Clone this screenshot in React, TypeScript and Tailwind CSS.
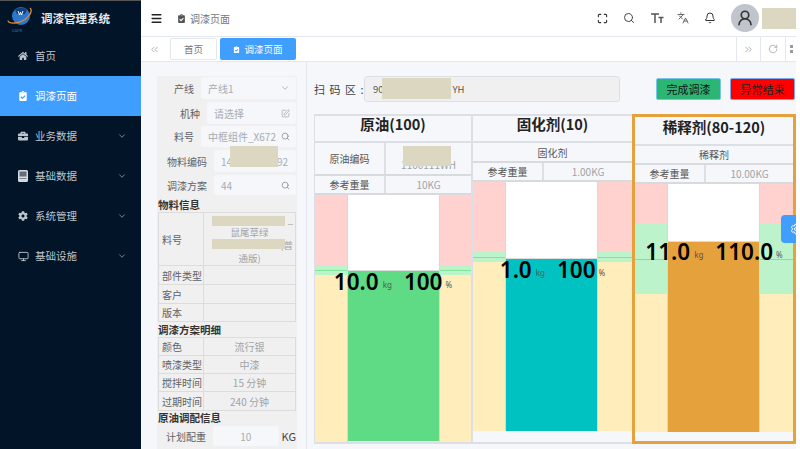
import React from "react";
import { ChevronDown, ChevronsLeft, ChevronsRight, RotateCw, Search, SquarePen, Menu, Maximize, Languages, Bell, UserRound, Monitor, Settings } from "lucide-react";
import { FaHome, FaClipboardCheck, FaBriefcase, FaCog } from "react-icons/fa";

const font = "font-['Noto_Sans_CJK_SC','Noto_Sans',sans-serif]";

function Mask({ className }: { className: string }) {
  return <div className={"absolute bg-[#dcd7c0] " + className} />;
}

function BookIcon() {
  return (
    <svg viewBox="0 0 10 12" className="w-[10px] h-[12px]" fill="#d5dae0">
      <path d="M1.5 0h7A1.5 1.5 0 0 1 10 1.500v9A1.500 1.500 0 0 1 8.500 12h-7A1.500 1.500 0 0 1 0 10.500v-9A1.500 1.500 0 0 1 1.500 0z" />
      <path d="M1.500 1.500h7v5h-7zM1.500 8h7v.8h-7z" fill="#011428" opacity=".55" />
    </svg>
  );
}

function FontSizeIcon() {
  return (
    <svg viewBox="0 0 14 12" className="ml-[15px] w-[14px] h-[12px]" fill="none" stroke="#555" strokeWidth="1.500">
      <path d="M1 2h8M5 2v9M8.500 5.500h5M11 5.500V11" />
    </svg>
  );
}

function NavItem({ icon, label, active, arrow }: { icon: React.ReactNode; label: string; active?: boolean; arrow?: boolean }) {
  return (
    <div className={"h-10 flex items-center pl-[18px] pr-[14px] text-[10.5px] " + (active ? "bg-[#409eff] text-white" : "text-[#bfc5cc]")}>
      <span className="w-[17px] flex items-center">{icon}</span>
      <span className="flex-1">{label}</span>
      {arrow && <ChevronDown size={10} className="text-[#8f99a5]" />}
    </div>
  );
}

function Sidebar() {
  return (
    <aside className="w-[141px] shrink-0 h-full bg-[#011428] border-t border-[#555]">
      <div className="h-[35px] flex items-center pl-[7px]">
        <div className="relative w-[27px] h-[28px]">
          <svg viewBox="0 0 27 28" className="w-[27px] h-[28px]">
            <circle cx="14" cy="11" r="9" fill="#2d78c8" />
            <path d="M8 5c3-3 9-3 12 0l-2 4H10z" fill="#123f7d" />
            <path d="M11 6l1.500 4 1-3 1 3 1.500-4" stroke="#fff" strokeWidth=".9" fill="none" />
            <path d="M23 3c4 4-4 14-15 15-4 .4-7-.5-7-2.500" stroke="#e08a2c" strokeWidth="1.300" fill="none" />
          </svg>
          <span className="absolute left-[5px] top-[23px] text-[4px] leading-[5px] text-[#3f7fc8]">CGFR</span>
        </div>
        <span className="ml-[7px] text-[11.5px] font-bold text-[#e6e8ea]">调漆管理系统</span>
      </div>
      <NavItem icon={<FaHome size={10} />} label="首页" />
      <NavItem active icon={<FaClipboardCheck size={10} />} label="调漆页面" />
      <NavItem arrow icon={<FaBriefcase size={10} />} label="业务数据" />
      <NavItem arrow icon={<BookIcon />} label="基础数据" />
      <NavItem arrow icon={<FaCog size={10} />} label="系统管理" />
      <NavItem arrow icon={<Monitor size={11} />} label="基础设施" />
    </aside>
  );
}

function Header() {
  return (
    <header className="h-[37px] bg-white border-b border-[#e4e7ed] flex items-center pl-[9px] text-[#5a5e66]">
      <Menu size={13} strokeWidth={2.6} className="text-[#222]" />
      <FaClipboardCheck size={9} className="ml-[14px] text-[#555]" />
      <span className="ml-[4px] text-[10px] text-[#777]">调漆页面</span>
      <div className="ml-auto flex items-center">
        <Maximize size={11} strokeWidth={2.4} className="text-[#333]" />
        <Search size={12} className="ml-[15px] text-[#444]" />
        <FontSizeIcon />
        <Languages size={12} className="ml-[13px] text-[#666]" />
        <Bell size={12} className="ml-[15px] text-[#333]" />
        <div className="ml-[15px] w-[28px] h-[28px] rounded-full bg-[#c0c4cc] flex items-center justify-center">
          <UserRound size={18} strokeWidth={2.2} className="text-[#333]" />
        </div>
        <div className="ml-[3px] w-[34px] h-[21px] bg-[#dcd7c0]" />
      </div>
    </header>
  );
}

function TabBar() {
  return (
    <div className="h-[25px] bg-white border-b border-[#e4e7ed] flex items-center text-[9.5px]">
      <div className="w-[26px] flex justify-center"><ChevronsLeft size={11} className="text-[#aaa]" /></div>
      <div className="ml-[3px] w-[47px] h-[22px] bg-white border border-[#e4e7ed] rounded-[2px] flex items-center justify-center text-[#777]">首页</div>
      <div className="ml-[3px] w-[76px] h-[22px] bg-[#409eff] rounded-[2px] flex items-center justify-center gap-[4px] text-white">
        <FaClipboardCheck size={7} />调漆页面
      </div>
      <div className="ml-auto flex h-full">
        <div className="w-[24px] border-l border-[#e4e7ed] flex items-center justify-center"><ChevronsRight size={11} className="text-[#aaa]" /></div>
        <div className="w-[25px] border-l border-[#e4e7ed] flex items-center justify-center"><RotateCw size={10} className="text-[#aaa]" /></div>
        <div className="w-[11px] border-l border-[#e4e7ed] flex flex-col items-center justify-center gap-[2px]">
          <i className="w-[3px] h-[3px] bg-[#999]" /><i className="w-[3px] h-[3px] bg-[#999]" />
        </div>
      </div>
    </div>
  );
}

function Field({ label, value, icon, mlClass, className, children }: { label: string; value: string; icon?: React.ReactNode; mlClass: string; className: string; children?: React.ReactNode }) {
  return (
    <div className={"relative flex items-center " + className}>
      <div className={"text-right text-[#606266] text-[10px] pr-[7px] shrink-0 " + mlClass}>{label}</div>
      <div className="flex-1 min-w-0 h-full bg-[#f5f7fa] rounded-[3px] flex items-center pl-[7px] pr-[6px] text-[#a8abb2] text-[10px]">
        <span className="flex-1 whitespace-pre overflow-hidden">{value}</span>
        {icon}
      </div>
      {children}
    </div>
  );
}

function Row({ label, value, className }: { label: string; value?: React.ReactNode; className: string }) {
  return (
    <div className={"flex border-b border-[#dcdcdc] text-[10px] " + className}>
      <div className="w-[45px] shrink-0 flex items-center pl-[3px] text-[#606266] border-r border-[#dcdcdc] whitespace-nowrap">{label}</div>
      <div className="flex-1 flex items-center justify-center text-[#a0a3a8]">{value}</div>
    </div>
  );
}

function SectionTitle({ children, className }: { children: React.ReactNode; className: string }) {
  return <div className={"text-[10.5px] font-bold text-[#333] leading-[13px] " + className}>{children}</div>;
}

function LeftPanel() {
  return (
    <div className="w-[140px] h-full mt-[14px] bg-[#f0f0f0] shrink-0 pr-[1px]">
      <Field className="h-[22px] mt-[1px]" mlClass="w-[44px]" label="产线" value="产线1" icon={<ChevronDown size={10} className="text-[#aaa]" />} />
      <Field className="h-[22px] mt-[3px]" mlClass="w-[50px]" label="机种" value="请选择" icon={<SquarePen size={9} className="text-[#aaa]" />} />
      <Field className="h-[21px] mt-[2px]" mlClass="w-[44px]" label="料号" value="中框组件_X672" icon={<Search size={9} className="ml-[2px] text-[#888]" />} />
      <Field className="h-[22px] mt-[3px]" mlClass="w-[57px]" label="物料编码" value="14                    92">
        <Mask className="left-[73px] top-[-4px] w-[48px] h-[21px]" />
      </Field>
      <Field className="h-[20px] mt-[3px]" mlClass="w-[57px]" label="调漆方案" value="44" icon={<Search size={9} className="text-[#888]" />} />
      <SectionTitle className="mt-[3px] h-[14px] pl-[1px]">物料信息</SectionTitle>
      <div className="ml-[1px] border border-b-0 border-[#dcdcdc]">
        <Row className="h-[53px]" label="料号" value={
          <div className="relative w-full text-center leading-[13px] text-[9.5px]">
            <div className="text-right pr-[2px]">_</div><div>鼠尾草绿</div><div className="text-right pr-[2px]">(普</div><div>通版)</div>
            <Mask className="left-[8px] top-[3px] w-[73px] h-[10px]" />
            <Mask className="left-[8px] top-[26px] w-[73px] h-[10px]" />
          </div>
        } />
        <Row className="h-[19px]" label="部件类型" />
        <Row className="h-[19px]" label="客户" />
        <Row className="h-[18px]" label="版本" />
      </div>
      <SectionTitle className="mt-[1px] h-[14px] pl-[1px]">调漆方案明细</SectionTitle>
      <div className="ml-[1px] border border-b-0 border-[#dcdcdc]">
        <Row className="h-[18px]" label="颜色" value="流行银" />
        <Row className="h-[18px]" label="喷漆类型" value="中漆" />
        <Row className="h-[18px]" label="搅拌时间" value="15 分钟" />
        <Row className="h-[19px]" label="过期时间" value="240 分钟" />
      </div>
      <SectionTitle className="h-[15px] pl-[1px]">原油调配信息</SectionTitle>
      <div className="flex items-center h-[20px]">
        <div className="w-[57px] pr-[7px] text-right text-[10px] text-[#606266]">计划配重</div>
        <div className="w-[67px] h-full bg-[#f5f7fa] rounded-[3px] flex items-center justify-center text-[10px] text-[#a8abb2]">10</div>
        <div className="ml-[3px] text-[11px] text-[#444]">KG</div>
      </div>
    </div>
  );
}

type ColProps = {
  title: string;
  titleShift: string;
  wrap: string;
  head: string;
  topRow: React.ReactNode;
  weight: string;
  red: string;
  green: string;
  yellow: string;
  line: string;
  white: string;
  fill: string;
  valueTop: string;
  value: string;
  pct: string;
  tank: string;
};

function Column(p: ColProps) {
  return (
    <div className={"flex flex-col shrink-0 h-[330px] " + p.wrap}>
      <div className={"flex items-center justify-center text-[14.5px] font-bold text-[#222] border-b-2 border-[#dcdfe6] " + p.head}>
        <span className={"relative " + p.titleShift}>{p.title}</span>
      </div>
      {p.topRow}
      <div className="flex h-[19px] shrink-0 border-b-2 border-[#d8dade] text-[10px]">
        <div className="w-[71px] flex items-center justify-center text-[#555] border-r-2 border-[#dcdfe6]">参考重量</div>
        <div className="flex-1 flex items-center justify-center text-[#a0a3a8]">{p.weight}</div>
      </div>
      <div className={"relative shrink-0 " + p.tank}>
        <div className={"bg-[#ffd2d0] " + p.red} />
        <div className={"relative bg-[#bdf3cb] " + p.green}>
          <div className={"absolute inset-x-0 h-[1px] bg-[#7fe39a] " + p.line} />
        </div>
        <div className={"bg-[#ffedbb] " + p.yellow} />
        <div className="absolute inset-y-0 left-[32px] w-[93px] flex flex-col border-x border-[#d8d8d8]">
          <div className={"bg-white shrink-0 " + p.white} />
          <div className={"flex-1 border-t border-[#ddd] " + p.fill} />
        </div>
        <div className={"absolute inset-x-0 flex items-end justify-center text-black font-['Noto_Sans',sans-serif] " + p.valueTop}>
          <span className="text-[22.5px] font-semibold leading-[26px]">{p.value}</span>
          <span className="ml-[4px] mb-[5px] text-[8px] leading-[10px] text-[#555]">kg</span>
          <span className="ml-[12px] text-[22.5px] font-semibold leading-[26px]">{p.pct}</span>
          <span className="ml-[3px] mb-[5px] text-[8px] leading-[10px] text-[#555]">%</span>
        </div>
      </div>
    </div>
  );
}

function Columns() {
  return (
    <div className="flex mt-[12px]">
      <Column
        wrap="w-[159px] border-t-2 border-l border-r-2 border-b-2 border-[#dcdfe6]"
        head="h-[27px] shrink-0"
        titleShift="top-[-5px]"
        title="原油(100)"
        topRow={
          <div className="relative flex h-[33px] shrink-0 border-b-2 border-[#d8dade] text-[10px]">
            <div className="w-[71px] flex items-center justify-center text-[#555] border-r-2 border-[#dcdfe6]">原油编码</div>
            <div className="flex-1 flex items-end justify-end pr-[15px] pb-[2px] text-[#a0a3a8] whitespace-nowrap">1100111WH</div>
            <Mask className="left-[88px] top-[3px] w-[48px] h-[20px]" />
          </div>
        }
        weight="10KG"
        tank="h-[247px]"
        red="h-[70px]"
        green="h-[10px]"
        yellow="h-[167px]"
        line="top-[5px]"
        white="h-[75px]"
        fill="bg-[#5fda85] mb-[1px]"
        valueTop="top-[74px]"
        value="10.0"
        pct="100"
      />
      <Column
        wrap="w-[159px] border-t-2 border-b-2 border-[#dcdfe6]"
        head="h-[27px] shrink-0"
        titleShift="top-[-5px]"
        title="固化剂(10)"
        topRow={
          <div className="flex h-[20px] shrink-0 border-b-2 border-[#d8dade] text-[10px] text-[#555] items-center justify-center">固化剂</div>
        }
        weight="1.00KG"
        tank="h-[249px]"
        red="h-[70px]"
        green="h-[10px]"
        yellow="h-[169px]"
        line="top-[5px]"
        white="h-[76px]"
        fill="bg-[#00c2c0]"
        valueTop="top-[75px]"
        value="1.0"
        pct="100"
      />
      <Column
        wrap="w-[164px] border-[3px] border-[#e5a23c]"
        head="h-[29px] shrink-0"
        titleShift="top-[-4px]"
        title="稀释剂(80-120)"
        topRow={
          <div className="flex h-[19px] shrink-0 border-b-2 border-[#d8dade] text-[10px] text-[#555] items-center justify-center">稀释剂</div>
        }
        weight="10.00KG"
        tank="h-[248px]"
        red="h-[39px]"
        green="h-[71px]"
        yellow="h-[138px]"
        line="top-[36px]"
        white="h-[57px]"
        fill="bg-[#e5a23c]"
        valueTop="top-[55px]"
        value="11.0"
        pct="110.0"
      />
    </div>
  );
}

function App() {
  return (
    <div className={"relative w-[800px] h-[449px] overflow-hidden bg-white flex " + font}>
      <Sidebar />
      <div className="w-[655px] h-full flex flex-col">
        <Header />
        <TabBar />
        <main className="flex-1 min-h-0 bg-[#f5f7fa] flex pl-[16px]">
          <LeftPanel />
          <section className="ml-[9px] flex-1 min-w-0 border-l border-[#e4e7ed] pl-[7px] pt-[14px]">
            <div className="flex items-center h-[26px]">
              <span className="w-[50px] text-[11px] tracking-[1px] text-[#444] whitespace-nowrap">扫 码 区 :</span>
              <div className="relative w-[256px] h-full bg-[#f0f0f0] border border-[#dcdfe6] rounded-[3px] flex items-center pl-[8px] text-[9.5px] text-[#555]">
                90<span className="ml-[69px]">YH</span>
                <Mask className="left-[17px] top-[1px] w-[69px] h-[21px]" />
              </div>
              <button className="ml-[36px] w-[65px] h-[22px] bg-[#2bb673] border border-[#7cc4ec] rounded-[2px] text-[11px] text-[#111]">完成调漆</button>
              <button className="ml-[9px] w-[65px] h-[22px] bg-[#ff0000] border border-[#7aa8e8] rounded-[2px] text-[11px] text-[#222]">异常结束</button>
            </div>
            <Columns />
          </section>
        </main>
      </div>
      <div className="absolute left-[781px] top-[215px] w-[15px] h-[28px] bg-[#409eff] rounded-l-[4px] flex items-center pl-[9px] overflow-hidden text-white">
        <Settings size={12} className="shrink-0" />
      </div>
    </div>
  );
}

export default App;
